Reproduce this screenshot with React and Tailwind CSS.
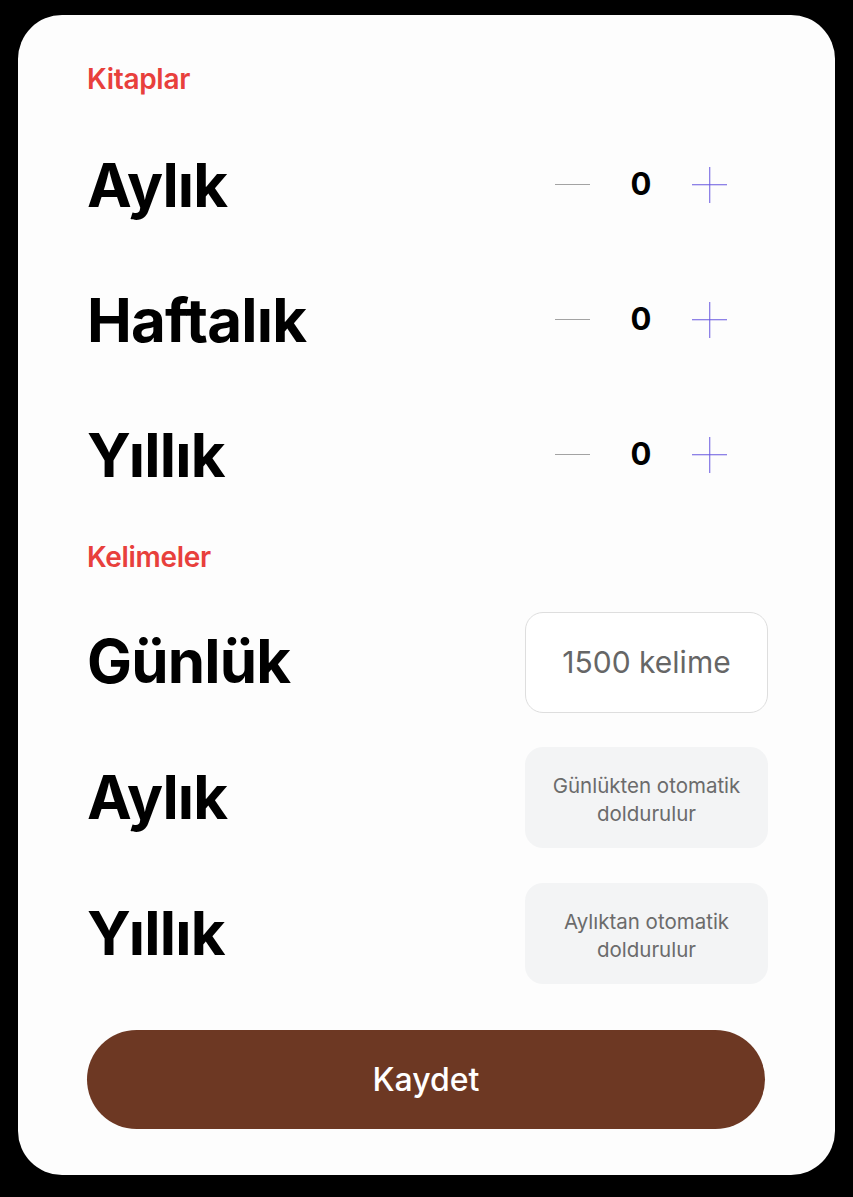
import React, { useState } from 'react';

const font = { fontFamily: 'Inter, "Noto Sans", "Liberation Sans", sans-serif' };

const SectionLabel = ({ children, className = '' }) => (
  <div className={`h-[40px] flex items-center text-[28px] font-semibold text-[#e8403c] tracking-[-0.3px] ${className}`}>
    {children}
  </div>
);

const RowLabel = ({ children }) => (
  <span className="text-[60px] font-bold text-black tracking-[-0.8px] leading-none">{children}</span>
);

const Stepper = ({ value, onChange }) => (
  <div className="w-[243px] flex items-center pl-[30px]">
    <button onClick={() => onChange(Math.max(0, value - 1))} className="w-[35px] h-[36px] flex items-center" aria-label="Azalt">
      <span className="block w-[35px] h-[1.5px] bg-[#a3a3a3]" />
    </button>
    <span className="w-[102px] text-center text-[31px] font-bold text-black">{value}</span>
    <button onClick={() => onChange(value + 1)} className="w-[35px] h-[36px] relative" aria-label="Artır">
      <span className="absolute left-0 right-0 top-1/2 -translate-y-1/2 h-[1.5px] bg-[#6a5ae0]" />
      <span className="absolute top-0 bottom-0 left-1/2 -translate-x-1/2 w-[1.5px] bg-[#6a5ae0]" />
    </button>
  </div>
);

export default function App() {
  const [books, setBooks] = useState({ monthly: 0, weekly: 0, yearly: 0 });

  const set = (k) => (v) => setBooks((p) => ({ ...p, [k]: v }));

  return (
    <div className="w-[853px] h-[1197px] bg-black pt-[15px] px-[18px]" style={font}>
      <div className="w-[817px] h-[1160px] bg-[#fdfdfd] rounded-[44px] pl-[69px] pr-[67px] pt-[44px]">
        <SectionLabel>Kitaplar</SectionLabel>

        <div className="mt-[18px]">
          <div className="h-[135px] flex items-center justify-between">
            <RowLabel>Aylık</RowLabel>
            <Stepper value={books.monthly} onChange={set('monthly')} />
          </div>
          <div className="h-[135px] flex items-center justify-between">
            <RowLabel>Haftalık</RowLabel>
            <Stepper value={books.weekly} onChange={set('weekly')} />
          </div>
          <div className="h-[135px] flex items-center justify-between">
            <RowLabel>Yıllık</RowLabel>
            <Stepper value={books.yearly} onChange={set('yearly')} />
          </div>
        </div>

        <SectionLabel className="mt-[15px]">Kelimeler</SectionLabel>

        <div className="mt-[16px]">
          <div className="h-[136px] flex items-center justify-between">
            <RowLabel>Günlük</RowLabel>
            <div className="w-[243px] h-[101px] mt-[2px] rounded-[18px] border border-[#dedede] bg-white flex items-center justify-center text-[30px] text-[#666666]">
              1500 kelime
            </div>
          </div>
          <div className="h-[136px] flex items-center justify-between">
            <RowLabel>Aylık</RowLabel>
            <div className="w-[243px] h-[101px] rounded-[18px] bg-[#f3f4f5] flex items-center justify-center text-center text-[20.5px] leading-[28px] text-[#6b6b6b] px-3 pt-[6px]">
              Günlükten otomatik<br />doldurulur
            </div>
          </div>
          <div className="h-[136px] flex items-center justify-between">
            <RowLabel>Yıllık</RowLabel>
            <div className="w-[243px] h-[101px] rounded-[18px] bg-[#f3f4f5] flex items-center justify-center text-center text-[20.5px] leading-[28px] text-[#6b6b6b] px-3 pt-[6px]">
              Aylıktan otomatik<br />doldurulur
            </div>
          </div>
        </div>

        <button className="mt-[29px] w-[678px] h-[99px] rounded-full bg-[#6d3823] text-white text-[32px] font-medium">
          Kaydet
        </button>
      </div>
    </div>
  );
}
